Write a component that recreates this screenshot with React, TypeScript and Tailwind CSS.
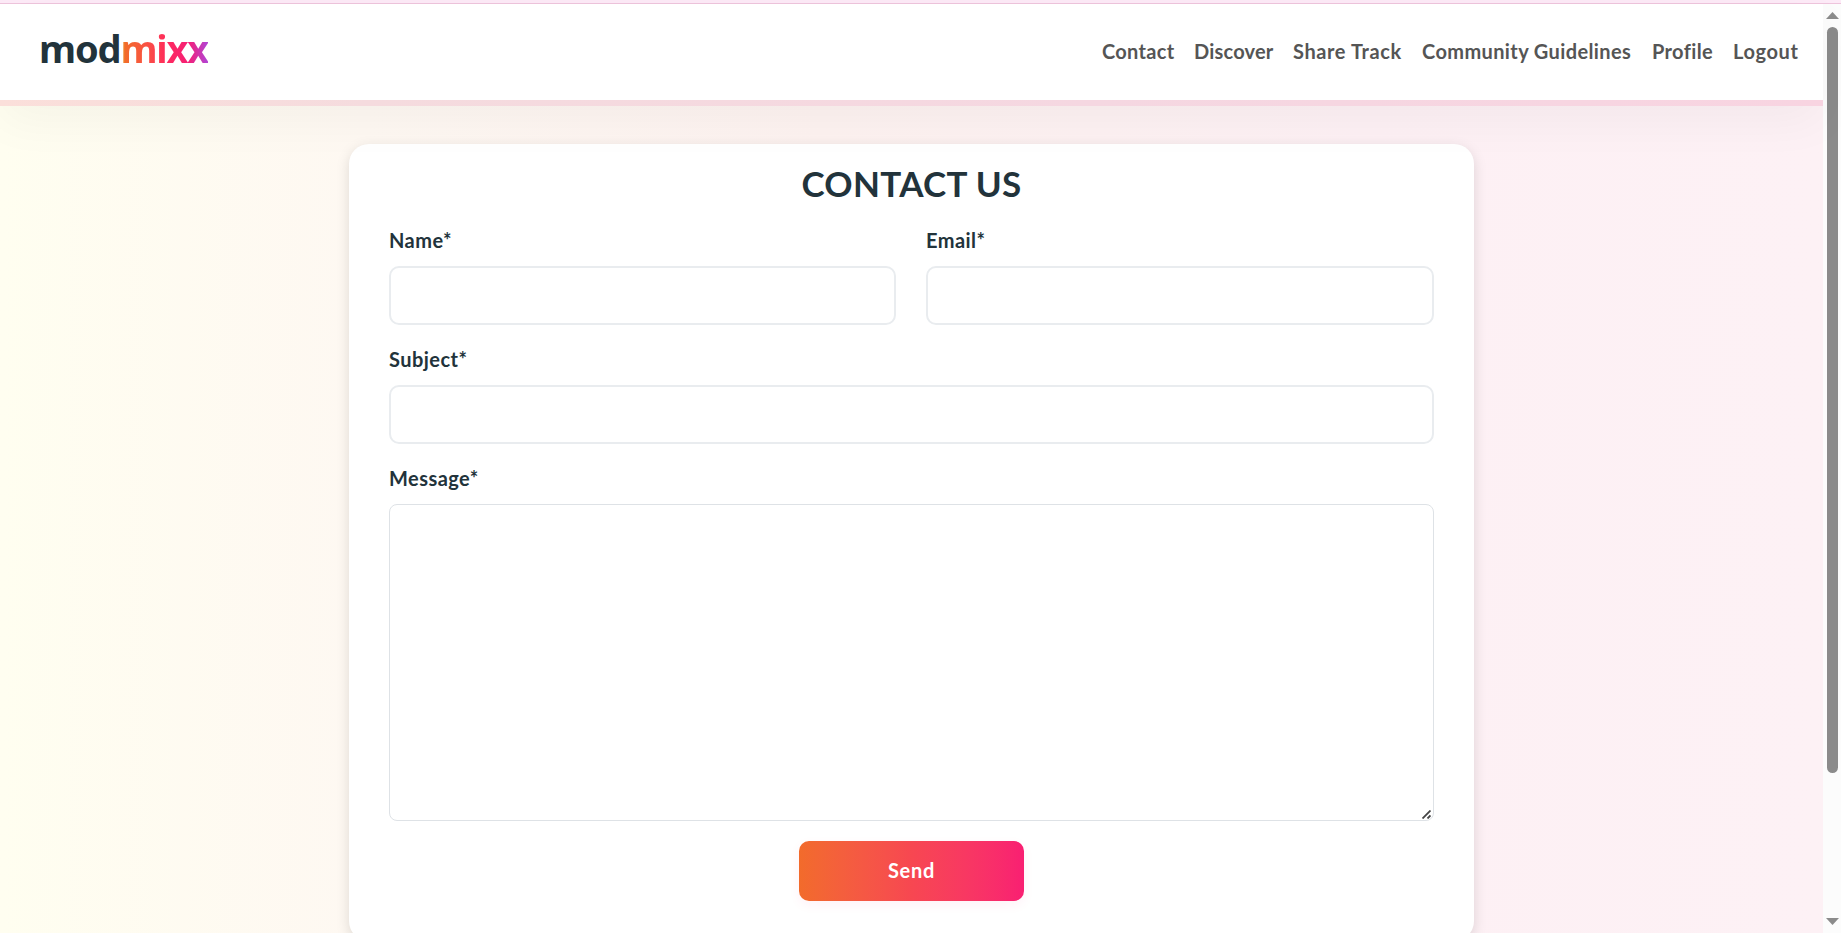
const links: [string, string][] = [
  ['Contact', 'w-[72px] tracking-[0.3px]'],
  ['Discover', 'w-[79px] tracking-[0.2px]'],
  ['Share Track', 'w-[109px] tracking-[0.6px]'],
  ['Community Guidelines', 'w-[210px] tracking-[0.38px]'],
  ['Profile', 'w-[61px] tracking-[0.35px]'],
  ['Logout', 'w-[66px] tracking-[0.6px]'],
];

function Field({ id, label, size }: { id: string; label: string; size: string }) {
  return (
    <div className={`flex flex-col ${size}`}>
      <label htmlFor={id} className="h-[30px] text-[20px] leading-[30px] font-bold tracking-[0.45px] text-[#22333b]">{label}</label>
      <input id={id} className="mt-[11px] h-[59px] w-full rounded-[10px] border-2 border-[#e9ecef] bg-white px-4 outline-none" />
    </div>
  );
}

export default function App() {
  return (
    <div className="flex h-[933px] w-full flex-col overflow-hidden font-['Lato',sans-serif]">
      <div className="h-1 shrink-0 border-b border-[#eec4dc] bg-[#fdeaf7]" />
      <div className="flex min-h-0 flex-1">
        <div className="flex min-w-0 flex-1 flex-col bg-[linear-gradient(90deg,#fffef0_0%,#fef8f2_20%,#fdf2f0_45%,#fdf0f4_75%,#fdf1f5_100%)]">
          <header className="z-10 shrink-0 bg-[linear-gradient(90deg,#fbdfda_0%,#f5dbde_20%,#f5d7e1_60%,#f8d4e1_100%)] pb-[6px] shadow-[0_16px_48px_rgba(0,0,0,0.04)]">
            <div className="flex h-24 items-start justify-between bg-white pr-6 pl-[39px]">
              <a className="mt-4 font-['Noto_Sans',sans-serif] text-[38px] leading-[56px] font-bold tracking-[-1.15px] text-[#22333b]">
                mod<span className="bg-[linear-gradient(90deg,#e8c030_0%,#f26b2b_6%,#fa4f45_32%,#ff2b5c_52%,#f51f76_78%,#b542d0_98%)] bg-clip-text text-transparent">mixx</span>
              </a>
              <nav className="mt-8 flex gap-5 text-[20px] leading-[30px] font-bold whitespace-nowrap text-[#555]">
                {links.map(([text, style]) => <a key={text} className={style}>{text}</a>)}
              </nav>
            </div>
          </header>
          <main className="mx-auto mt-[38px] flex h-[797px] w-[1125px] shrink-0 flex-col rounded-[20px] bg-white px-10 pt-[18px] shadow-[0_4px_14px_rgba(0,0,0,0.13)]">
            <h1 className="h-[46px] text-center text-[35px] leading-[42px] font-bold tracking-[0.35px] text-[#22333b]">CONTACT US</h1>
            <div className="mt-[17px] flex gap-[30px]">
              <Field id="name" label="Name*" size="w-[507px]" />
              <Field id="email" label="Email*" size="flex-1" />
            </div>
            <div className="mt-[19px] flex">
              <Field id="subject" label="Subject*" size="flex-1" />
            </div>
            <label htmlFor="message" className="mt-[19px] h-[30px] text-[20px] leading-[30px] font-bold tracking-[0.45px] text-[#22333b]">Message*</label>
            <div className="relative mt-[11px] h-[317px] shrink-0">
              <textarea id="message" className="block h-full w-full resize-none rounded-[8px] border border-[#dee2e6] bg-white outline-none" />
              <svg className="pointer-events-none absolute right-[3px] bottom-[2px] h-[9px] w-[9px]" viewBox="0 0 9 9" fill="none" stroke="#444" strokeWidth="1.8">
                <path d="M0.5 8.5L8.5 0.5M5.5 8.5L8.5 5.5" />
              </svg>
            </div>
            <button className="mx-auto mt-5 h-[60px] w-[225px] shrink-0 rounded-[10px] bg-linear-to-r from-[#f26b2b] via-[#f74751] to-[#f91f72] pb-0.5 text-[20px] font-bold tracking-[0.7px] text-white shadow-[0_4px_12px_rgba(249,31,114,0.06)]">Send</button>
          </main>
        </div>
        <aside className="flex w-[18px] shrink-0 flex-col items-center bg-[#fcfcfc]">
          <svg className="mt-2 h-[7px] w-[13px]" viewBox="0 0 13 7" fill="#8b8b8b"><path d="M0 7L6.5 0L13 7Z" /></svg>
          <div className="mt-2 h-[746px] w-[11px] rounded-full bg-[#8b8b8b]" />
          <svg className="mt-auto mb-2 h-[7px] w-[13px]" viewBox="0 0 13 7" fill="#8b8b8b"><path d="M0 0L6.5 7L13 0Z" /></svg>
        </aside>
      </div>
    </div>
  );
}
